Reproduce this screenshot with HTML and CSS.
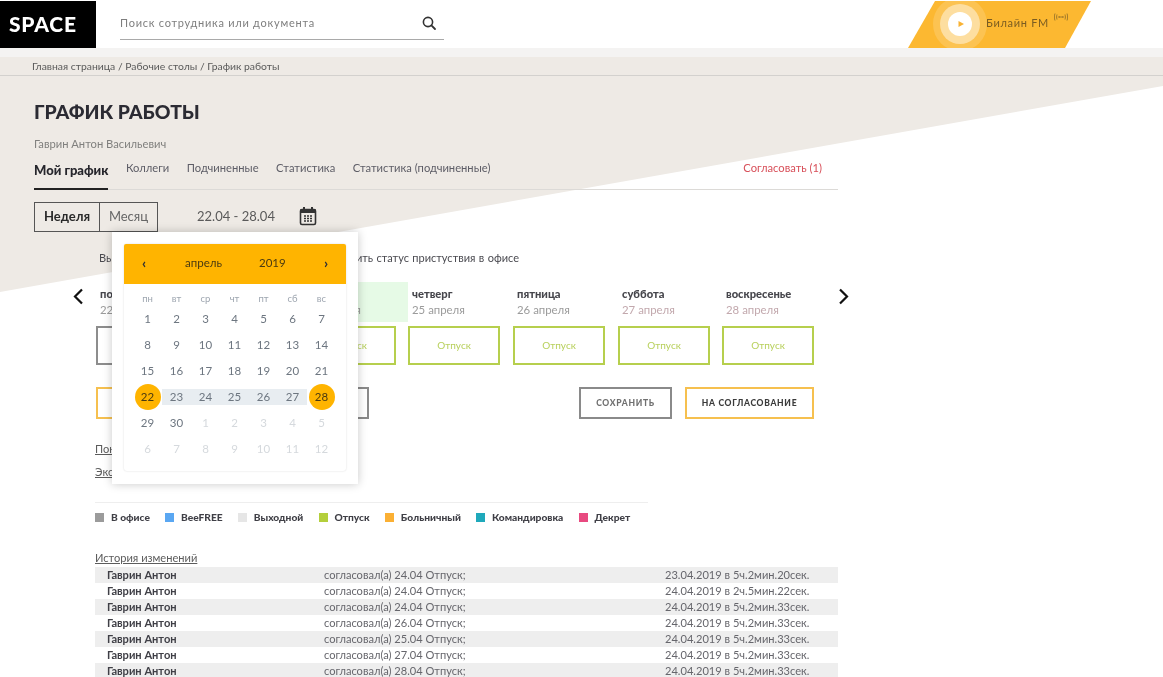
FILE: index.html
```html
<!DOCTYPE html>
<html lang="ru">
<head>
<meta charset="utf-8">
<title>График работы</title>
<link rel="stylesheet" href="styles.css">
</head>
<body>
<div class="app">
  <div class="wedge"></div>
  <header class="top">
    <div class="logo">SPACE</div>
    <div class="search">
      <span class="search-text">Поиск сотрудника или документа</span>
      <svg class="search-icon" width="16" height="16" viewBox="0 0 16 16"><circle cx="7" cy="7" r="4.6" fill="none" stroke="#333" stroke-width="1.6"/><path d="M10.4 10.4 14 14" stroke="#333" stroke-width="1.8" stroke-linecap="round"/></svg>
    </div>
    <div class="radio">
      <div class="radio-play"><svg width="8" height="8" viewBox="0 0 8 8"><path d="M1.5 1 7 4 1.5 7z" fill="#f9b233"/></svg></div>
      <span class="radio-name">Билайн FM</span>
      <svg class="radio-wave" width="14" height="10" viewBox="0 0 14 10" fill="none" stroke="#8a6a2a" stroke-width=".8"><path d="M1 1.5c-.8 2-.8 5 0 7M3 2.5c-.5 1.5-.5 3.500 0 5M5 4v2M9 4v2M11 2.500c.5 1.500.5 3.500 0 5M13 1.500c.8 2 .8 5 0 7M5 5h4"/></svg>
    </div>
  </header>
  <div class="strip"></div>
  <nav class="crumbs">Главная страница / Рабочие столы / График работы</nav>

  <main class="content">
    <h1 class="title">ГРАФИК РАБОТЫ</h1>
    <div class="person">Гаврин Антон Васильевич</div>
    <div class="tabs">
      <span class="tab tab-active">Мой график</span>
      <span class="tab">Коллеги</span>
      <span class="tab">Подчиненные</span>
      <span class="tab">Статистика</span>
      <span class="tab">Статистика (подчиненные)</span>
      <span class="approve">Согласовать (1)</span>
    </div>
    <div class="period">
      <div class="toggle"><span class="toggle-on">Неделя</span><span class="toggle-off">Месяц</span></div>
      <span class="range">22.04 - 28.04</span>
      <svg class="cal-icon" width="18" height="20" viewBox="0 0 18 20"><rect x="1.500" y="3.500" width="15" height="15" rx="1.500" fill="none" stroke="#333" stroke-width="1.600"/><rect x="1.500" y="3" width="15" height="4" fill="#333"/><rect x="4" y="1" width="2" height="4" fill="#333"/><rect x="12" y="1" width="2" height="4" fill="#333"/><path d="M5 10h2M8 10h2M11 10h2M5 12.500h2M8 12.500h2M11 12.500h2M5 15h2M8 15h2M11 15h2" stroke="#333" stroke-width="1.300"/></svg>
    </div>
    <p class="hint">Выберите дни недели, для которых хотите изменить статус пристуствия в офисе</p>

    <div class="week">
      <svg class="arrow" width="12" height="17" viewBox="0 0 12 17"><path d="M10 1.500 3 8.500l7 7" fill="none" stroke="#111" stroke-width="2.200"/></svg>
      <div class="days">
        <div class="day"><div class="day-head"><b>понедельник</b><span>22 апреля</span></div><div class="box box-gray">В офисе</div></div>
        <div class="day"><div class="day-head"><b>вторник</b><span>23 апреля</span></div><div class="box box-green">Отпуск</div></div>
        <div class="day"><div class="day-head day-today"><b>среда</b><span>24 апреля</span></div><div class="box box-green">Отпуск</div></div>
        <div class="day"><div class="day-head"><b>четверг</b><span>25 апреля</span></div><div class="box box-green">Отпуск</div></div>
        <div class="day"><div class="day-head"><b>пятница</b><span>26 апреля</span></div><div class="box box-green">Отпуск</div></div>
        <div class="day"><div class="day-head"><b>суббота</b><span class="off">27 апреля</span></div><div class="box box-green">Отпуск</div></div>
        <div class="day"><div class="day-head"><b>воскресенье</b><span class="off">28 апреля</span></div><div class="box box-green">Отпуск</div></div>
      </div>
      <svg class="arrow arrow-next" width="12" height="17" viewBox="0 0 12 17"><path d="M2 1.500 9 8.500l-7 7" fill="none" stroke="#111" stroke-width="2.200"/></svg>
    </div>

    <div class="actions">
      <div class="btn btn-yellow btn-wide"></div>
      <div class="btn btn-gray btn-wide"></div>
      <div class="btn btn-gray btn-save">СОХРАНИТЬ</div>
      <div class="btn btn-yellow btn-send">НА СОГЛАСОВАНИЕ</div>
    </div>

    <div class="links">
      <a class="link">Показать</a>
      <a class="link">Экспорт</a>
    </div>

    <div class="legend">
      <span class="lg"><i class="sw sw-office"></i>В офисе</span>
      <span class="lg"><i class="sw sw-free"></i>BeeFREE</span>
      <span class="lg"><i class="sw sw-off"></i>Выходной</span>
      <span class="lg"><i class="sw sw-vac"></i>Отпуск</span>
      <span class="lg"><i class="sw sw-sick"></i>Больничный</span>
      <span class="lg"><i class="sw sw-trip"></i>Командировка</span>
      <span class="lg"><i class="sw sw-dec"></i>Декрет</span>
    </div>

    <section class="history">
      <a class="link history-title">История изменений</a>
      <div class="row"><b>Гаврин Антон</b><span>согласовал(а) 24.04 Отпуск;</span><span>23.04.2019 в 5ч.2мин.20сек.</span></div>
      <div class="row"><b>Гаврин Антон</b><span>согласовал(а) 24.04 Отпуск;</span><span>24.04.2019 в 2ч.5мин.22сек.</span></div>
      <div class="row"><b>Гаврин Антон</b><span>согласовал(а) 24.04 Отпуск;</span><span>24.04.2019 в 5ч.2мин.33сек.</span></div>
      <div class="row"><b>Гаврин Антон</b><span>согласовал(а) 26.04 Отпуск;</span><span>24.04.2019 в 5ч.2мин.33сек.</span></div>
      <div class="row"><b>Гаврин Антон</b><span>согласовал(а) 25.04 Отпуск;</span><span>24.04.2019 в 5ч.2мин.33сек.</span></div>
      <div class="row"><b>Гаврин Антон</b><span>согласовал(а) 27.04 Отпуск;</span><span>24.04.2019 в 5ч.2мин.33сек.</span></div>
      <div class="row"><b>Гаврин Антон</b><span>согласовал(а) 28.04 Отпуск;</span><span>24.04.2019 в 5ч.2мин.33сек.</span></div>
    </section>
  </main>

  <div class="popup">
    <div class="cal">
      <div class="cal-head">
        <span class="cal-nav">‹</span>
        <span class="cal-month">апрель</span>
        <span class="cal-year">2019</span>
        <span class="cal-nav">›</span>
      </div>
      <div class="cal-grid">
        <span class="wd">пн</span><span class="wd">вт</span><span class="wd">ср</span><span class="wd">чт</span><span class="wd">пт</span><span class="wd">сб</span><span class="wd">вс</span>
        <span>1</span><span>2</span><span>3</span><span>4</span><span>5</span><span>6</span><span>7</span>
        <span>8</span><span>9</span><span>10</span><span>11</span><span>12</span><span>13</span><span>14</span>
        <span>15</span><span>16</span><span>17</span><span>18</span><span>19</span><span>20</span><span>21</span>
        <span class="sel sel-start">22</span><span class="mid">23</span><span class="mid">24</span><span class="mid">25</span><span class="mid">26</span><span class="mid">27</span><span class="sel sel-end">28</span>
        <span>29</span><span>30</span><span class="out">1</span><span class="out">2</span><span class="out">3</span><span class="out">4</span><span class="out">5</span>
        <span class="out">6</span><span class="out">7</span><span class="out">8</span><span class="out">9</span><span class="out">10</span><span class="out">11</span><span class="out">12</span>
      </div>
    </div>
  </div>
</div>
</body>
</html>
```

FILE: styles.css
```css
* { box-sizing: border-box; }
html, body { margin: 0; padding: 0; background: #fff; }
body { font-family: Lato, "Noto Sans", sans-serif; color: #4b4b4b; }

.app {
  position: relative;
  width: 1163px;
  height: 677px;
  overflow: hidden;
  background: #fff;
  filter: blur(.35px);
}
.wedge {
  position: absolute;
  left: 0;
  top: 57px;
  width: 1163px;
  height: 235px;
  background: #eeeae5;
  clip-path: polygon(0 0, 100% 0, 100% 12.300%, 0 100%);
}

.top {
  position: relative;
  display: flex;
  height: 48px;
  padding-top: 1px;
  background: #fff;
}
.logo {
  width: 96px;
  height: 47px;
  background: #000;
  color: #fff;
  font: 900 21px/45px Lato, sans-serif;
  letter-spacing: .8px;
  padding-left: 9px;
}
.search {
  display: flex;
  align-items: center;
  justify-content: space-between;
  width: 324px;
  height: 39px;
  margin-left: 24px;
  padding: 4px 7px 0 0;
  border-bottom: 1px solid #a9a9a9;
}
.search-text { font-size: 11px; letter-spacing: .75px; color: #7e7e7e; }
.search-icon { margin-top: 1px; }
.radio {
  display: flex;
  align-items: flex-start;
  width: 183px;
  height: 47px;
  margin-left: auto;
  margin-right: 72px;
  padding-left: 40px;
  background: #fcb831;
  clip-path: polygon(27px 0, 100% 0, 157px 100%, 0 100%);
  overflow: hidden;
}
.radio-play {
  display: flex;
  align-items: center;
  justify-content: center;
  flex: none;
  width: 24px;
  height: 24px;
  margin-top: 11px;
  padding-left: 1px;
  border-radius: 50%;
  background: #fff;
  box-shadow: 0 0 0 8px rgba(255,255,255,.45), 0 0 0 15px rgba(255,255,255,.16);
}
.radio-name {
  margin: 15px 0 0 14px;
  font-size: 11px;
  letter-spacing: .7px;
  line-height: 14px;
  color: #7a5c22;
}
.radio-wave { margin: 11px 0 0 5px; }

.strip { position: relative; height: 9px; background: #f4f3f2; }
.crumbs {
  position: relative;
  height: 19px;
  padding-left: 32px;
  font-size: 10.400px;
  line-height: 19px;
  color: #5a5a5a;
  border-bottom: 1px solid #d3d1ce;
}

.content { position: relative; width: 838px; padding-left: 34px; }
.title {
  margin: 24px 0 0;
  font-size: 19.400px;
  line-height: 24px;
  font-weight: 900;
  color: #2b2b33;
}
.person { margin-top: 13px; font-size: 11.200px; line-height: 14px; color: #80807e; }
.tabs {
  display: flex;
  align-items: flex-start;
  height: 33px;
  margin-top: 6px;
  border-bottom: 1px solid #dcdad7;
}
.tab { margin-right: 17.500px; padding-top: 4px; font-size: 11.200px; line-height: 14px; color: #5d5d66; }
.tab-active {
  height: 33px;
  padding-top: 6px;
  border-bottom: 2px solid #222;
  font-size: 13px;
  font-weight: 900;
  color: #26262c;
}
.approve { margin-left: auto; margin-right: 16px; padding-top: 4px; font-size: 11.200px; line-height: 14px; color: #d8505a; }

.period { display: flex; align-items: center; height: 30px; margin-top: 12px; }
.toggle { display: flex; height: 30px; width: 124px; border: 1px solid #555; font-size: 13px; line-height: 27px; }
.toggle-on { width: 65px; border-right: 1px solid #555; text-align: center; font-weight: 700; color: #2a2a2a; }
.toggle-off { flex: 1; text-align: center; color: #666; }
.range { margin: 0 0 2px 39px; font-size: 13px; color: #5a5a5a; }
.cal-icon { margin: 0 0 3px 24px; }

.hint { margin: 19px 0 0 65px; font-size: 11px; line-height: 14px; word-spacing: .6px; color: #4a4a50; white-space: nowrap; }

.week { display: flex; margin-top: 17px; }
.arrow { flex: none; margin: 6px 0 0 38px; }
.arrow-next { margin: 6px 0 0 11px; }
.days { display: grid; grid-template-columns: 104px 104px 104px 105px 105px 104px 104.500px; margin-left: 12px; }
.day-head { height: 40px; padding: 5px 0 0 4px; }
.day-head b { display: block; font-size: 11.200px; line-height: 14px; font-weight: 900; color: #46464c; }
.day-head span { display: block; margin-top: 2px; font-size: 11.400px; line-height: 14px; color: #9b9b9b; }
.day-head .off { color: #c2a8ad; }
.day-today { background: #e6fae6; }
.box {
  width: 92px;
  height: 39px;
  margin-top: 4px;
  font-size: 10px;
  line-height: 35px;
  text-align: center;
  border: 2px solid;
}
.box-gray { border-color: #8d8d8d; color: #777; }
.box-green { border-color: #b6cf4d; color: #b8d05c; }

.actions { display: flex; height: 32px; margin: 22px 24px 0 62px; }
.btn {
  height: 32px;
  border: 2px solid;
  font-size: 8.500px;
  line-height: 29px;
  font-weight: 900;
  letter-spacing: .7px;
  text-align: center;
}
.btn-yellow { border-color: #f6c04f; color: #3a3a3a; }
.btn-gray { border-color: #8a8a8a; color: #707070; }
.btn-wide { width: 126px; margin-right: 21px; }
.btn-save { width: 93px; margin-left: auto; }
.btn-send { width: 129px; margin-left: 13px; }

.links { margin: 23px 0 0 61px; }
.link { display: block; width: max-content; font-size: 11.100px; line-height: 14px; color: #5c5c5c; text-decoration: underline; }
.links .link + .link { margin-top: 9px; }

.legend {
  display: flex;
  width: 553px;
  height: 30px;
  margin: 23px 0 0 61px;
  padding-top: 7px;
  border-top: 1px solid #eeeeee;
  font-size: 10.200px;
  font-weight: 900;
  line-height: 14px;
  color: #3f3f46;
  white-space: nowrap;
}
.lg { display: flex; align-items: center; height: 14px; margin-right: 15.200px; }
.sw { flex: none; width: 9px; height: 9px; margin-right: 7px; }
.sw-office { background: #9b9b9b; }
.sw-free { background: #5aa7f2; }
.sw-off { background: #e6e6e6; }
.sw-vac { background: #b4cf3c; }
.sw-sick { background: #fbb034; }
.sw-trip { background: #1fa9bb; }
.sw-dec { background: #e84a80; }

.history { margin: 18px 0 0 61px; }
.history-title { height: 17px; line-height: 15px; }
.row {
  display: grid;
  grid-template-columns: 217px 341px 1fr;
  height: 16px;
  padding-left: 12px;
  font-size: 11.100px;
  line-height: 16px;
  color: #66666c;
}
.row:nth-of-type(odd) { background: #eeeeee; }
.row b { font-weight: 700; color: #3f3f46; }

.popup {
  position: absolute;
  left: 112px;
  top: 232px;
  width: 246px;
  height: 252px;
  padding: 12px;
  background: #fff;
  box-shadow: 0 0 9px rgba(0,0,0,.22);
}
.cal { height: 227px; border-radius: 3px; box-shadow: 0 0 2px rgba(0,0,0,.16); }
.cal-head {
  display: grid;
  grid-template-columns: 43px 74px 65px 1fr;
  align-items: center;
  height: 40px;
  padding: 0 0 4px 18px;
  border-radius: 2px 2px 0 0;
  background: #ffb400;
  font-size: 11.500px;
  color: #4a3a10;
}
.cal-nav { font-size: 14px; font-weight: 900; color: #333; }
.cal-year { font-size: 11.500px; }
.cal-grid {
  display: grid;
  grid-template-columns: repeat(7, 29px);
  grid-template-rows: 12px repeat(6, 26px);
  justify-items: center;
  align-items: center;
  padding: 10px 0 0 9px;
  font-size: 11.500px;
  color: #6d7680;
}
.cal-grid > span { display: block; width: 100%; height: 16px; line-height: 16px; text-align: center; }
.cal-grid .wd { margin-top: -2px; font-size: 9.500px; color: #9ea6b0; }
.cal-grid .out { color: #d5d9dd; }
.cal-grid .mid { background: #e8edf1; }
.cal-grid .sel {
  width: 26px;
  height: 26px;
  border-radius: 50%;
  background: #ffb400;
  color: #4a3a10;
  line-height: 26px;
}
```
